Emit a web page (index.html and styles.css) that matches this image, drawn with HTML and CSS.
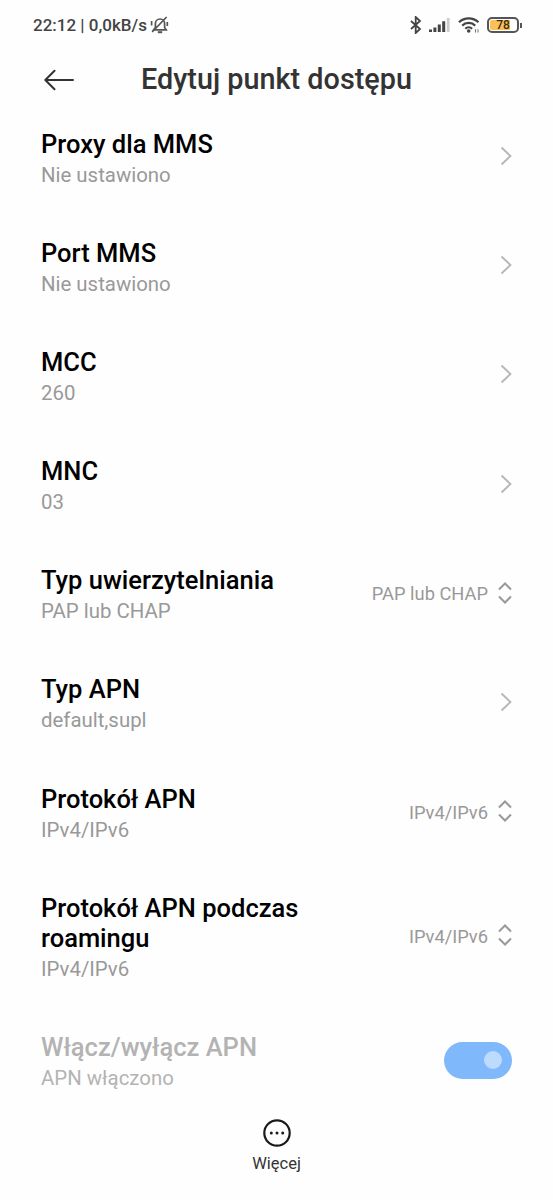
FILE: index.html
```html
<!DOCTYPE html>
<html lang="pl">
<head>
  <meta charset="UTF-8" />
  <meta name="viewport" content="width=device-width, initial-scale=1.0" />
  <title>Edytuj punkt dostępu</title>
  <link rel="stylesheet" href="styles.css">
</head>
<body>
  <div class="status-bar">
    <div class="status-left">
      <span>22:12 | 0,0kB/s</span>
      <svg class="bell" width="20" height="18" viewBox="0 0 20 18" fill="none" stroke="#555" stroke-width="1.7">
        <path d="M3.6 13.8h12.6l-1.6-2.3V7.6a4.6 4.6 0 0 0-9.2 0v3.9zM16.6 1 2.2 16M1.6 5v4.5M17.3 6v4" />
        <path d="M7.8 16.2h4.4" stroke-width="2" />
      </svg>
    </div>
    <div class="status-right">
      <svg width="12" height="18" viewBox="0 0 12 18" fill="none" stroke="#444" stroke-width="1.8">
        <path d="M1 5l9 8-4.3 4V1L10 5l-9 8" />
      </svg>
      <svg class="signal" width="22" height="16" viewBox="0 0 22 16" fill="#444">
        <path d="M0 12.5h3V15H0zM4.4 10.5h3V15h-3zM8.8 7.5h3V15h-3zM13.2 4.2h3V15h-3z" />
        <path d="M17.8 1h2.8v14h-2.8z" fill="#ccc" />
      </svg>
      <svg class="wifi" width="23" height="18" viewBox="0 0 23 18" fill="none" stroke="#444" stroke-width="2.2">
        <path d="M1 6.2a14 14 0 0 1 19.4 0M4.2 9.6a9.2 9.2 0 0 1 13 0M7.3 12.7a4.9 4.9 0 0 1 6.8 0" />
        <circle cx="10.7" cy="15" r="1.8" fill="#444" stroke="none" />
        <path d="M17.5 13.2v3.4M20 13.2v3.4" stroke="#777" stroke-width="1.1" />
      </svg>
      <div class="battery"><span>78</span></div>
    </div>
  </div>

  <header>
    <svg class="back" width="30" height="22" viewBox="0 0 30 22" fill="none" stroke="#333" stroke-width="2" stroke-linecap="round" stroke-linejoin="round">
      <path d="M29 11H1.5M10.5 1.8 1.3 11l9.2 9.2" />
    </svg>
    <h1>Edytuj punkt dostępu</h1>
  </header>

  <main>
    <div class="row">
      <div class="label">
        <div class="title">Proxy dla MMS</div>
        <div class="sub">Nie ustawiono</div>
      </div>
      <svg class="chevron" viewBox="0 0 12 20"><path d="M1.5 1.5 10.5 10l-9 8.5" /></svg>
    </div>
    <div class="row">
      <div class="label">
        <div class="title">Port MMS</div>
        <div class="sub">Nie ustawiono</div>
      </div>
      <svg class="chevron" viewBox="0 0 12 20"><path d="M1.5 1.5 10.5 10l-9 8.5" /></svg>
    </div>
    <div class="row">
      <div class="label">
        <div class="title">MCC</div>
        <div class="sub">260</div>
      </div>
      <svg class="chevron" viewBox="0 0 12 20"><path d="M1.5 1.5 10.5 10l-9 8.5" /></svg>
    </div>
    <div class="row">
      <div class="label">
        <div class="title">MNC</div>
        <div class="sub">03</div>
      </div>
      <svg class="chevron" viewBox="0 0 12 20"><path d="M1.5 1.5 10.5 10l-9 8.5" /></svg>
    </div>
    <div class="row">
      <div class="label">
        <div class="title">Typ uwierzytelniania</div>
        <div class="sub">PAP lub CHAP</div>
      </div>
      <div class="value">PAP lub CHAP</div>
      <svg class="updown" viewBox="0 0 14 22"><path d="M1 7.5l6-6 6 6M1 14.5l6 6 6-6" /></svg>
    </div>
    <div class="row">
      <div class="label">
        <div class="title">Typ APN</div>
        <div class="sub">default,supl</div>
      </div>
      <svg class="chevron" viewBox="0 0 12 20"><path d="M1.5 1.5 10.5 10l-9 8.5" /></svg>
    </div>
    <div class="row">
      <div class="label">
        <div class="title">Protokół APN</div>
        <div class="sub">IPv4/IPv6</div>
      </div>
      <div class="value">IPv4/IPv6</div>
      <svg class="updown" viewBox="0 0 14 22"><path d="M1 7.5l6-6 6 6M1 14.5l6 6 6-6" /></svg>
    </div>
    <div class="row">
      <div class="label">
        <div class="title">Protokół APN podczas roamingu</div>
        <div class="sub">IPv4/IPv6</div>
      </div>
      <div class="value">IPv4/IPv6</div>
      <svg class="updown" viewBox="0 0 14 22"><path d="M1 7.5l6-6 6 6M1 14.5l6 6 6-6" /></svg>
    </div>
    <div class="row disabled">
      <div class="label">
        <div class="title">Włącz/wyłącz APN</div>
        <div class="sub">APN włączono</div>
      </div>
      <div class="switch"><div class="knob"></div></div>
    </div>
  </main>

  <footer>
    <svg width="28" height="28" viewBox="0 0 28 28" fill="#1a1a1a">
      <circle cx="14" cy="14" r="12.7" fill="none" stroke="#1a1a1a" stroke-width="2.2" />
      <circle cx="8.3" cy="14" r="1.5" />
      <circle cx="14" cy="14" r="1.5" />
      <circle cx="19.7" cy="14" r="1.5" />
    </svg>
    <span>Więcej</span>
  </footer>
</body>
</html>
```
FILE: styles.css
```css
* {
  box-sizing: border-box;
}
body {
  margin: 0;
  height: 1200px;
  font-family: Roboto, sans-serif;
  background: #fefefe;
  color: #000;
  display: flex;
  flex-direction: column;
  overflow: hidden;
}
.status-bar {
  height: 50px;
  padding: 0 34px 0 33px;
  display: flex;
  justify-content: space-between;
  align-items: center;
  font-size: 17px;
  font-weight: 500;
  color: #444;
}
.status-left, .status-right {
  display: flex;
  align-items: center;
}
.bell {
  margin-left: 3px;
}
.signal {
  margin-left: 7px;
}
.wifi {
  margin-left: 7px;
}
/* body of the battery, the tip is the ::after */
.battery {
  position: relative;
  width: 32px;
  height: 16px;
  margin-left: 6px;
  padding: 1px;
  border: 2px solid #555;
  border-radius: 5px;
  background: linear-gradient(to right, #fcc05a 78%, #fff 78%) content-box;
  font-size: 12px;
  line-height: 11px;
  text-align: center;
  color: #3a2a10;
}
.battery::after {
  content: "";
  position: absolute;
  right: -5px;
  top: 4px;
  width: 2px;
  height: 5px;
  background: #555;
}
header {
  height: 52.5px;
  padding: 6px 44px 0 44px;
  display: flex;
  align-items: center;
}
header h1 {
  margin: 0 0 0 67px;
  font-size: 28.8px;
  line-height: 34px;
  font-weight: 500;
  color: #333;
  white-space: nowrap;
}
.back {
  margin-top: 1px;
}
.row {
  padding: 26px 41px 25.2px 41px;
  display: flex;
  align-items: center;
}
.label {
  width: 300px;
  margin-right: auto;
}
.title {
  font-size: 25.5px;
  line-height: 30px;
  font-weight: 500;
}
.sub {
  margin-top: 4px;
  font-size: 20.4px;
  line-height: 24px;
  color: #999;
}
.chevron {
  width: 12px;
  height: 20px;
  margin: 0 0 3px 0;
}
.chevron path {
  fill: none;
  stroke: #b5b5b5;
  stroke-width: 1.8;
}
.updown {
  width: 14px;
  height: 22px;
  margin: 0 0 3px 10px;
}
.updown path {
  fill: none;
  stroke: #999;
  stroke-width: 2;
}
.value {
  font-size: 18.3px;
  line-height: 24px;
  color: #999;
}
.disabled .title, .disabled .sub {
  color: #b3b3b3;
}
.switch {
  width: 68px;
  height: 37px;
  padding-right: 10px;
  margin-bottom: 2px;
  border-radius: 19px;
  background: #7fb9fb;
  display: flex;
  justify-content: flex-end;
  align-items: center;
}
.knob {
  width: 18px;
  height: 18px;
  border-radius: 50%;
  background: #bddbfd;
}
footer {
  padding-top: 4px;
  display: flex;
  flex-direction: column;
  align-items: center;
  font-size: 16.5px;
  line-height: 20px;
  color: #333;
}
footer span {
  margin-top: 7px;
}
```
